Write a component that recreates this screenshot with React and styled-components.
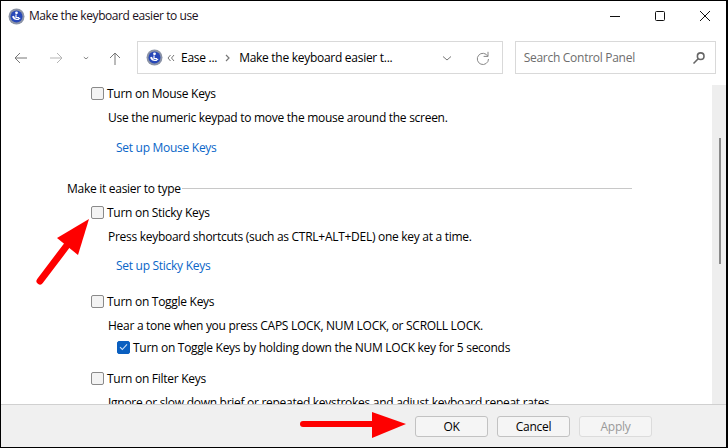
import React from 'react'
import styled, { createGlobalStyle } from 'styled-components'

const Global = createGlobalStyle`
  html, body { margin: 0; padding: 0; background: #fff; }
  * { box-sizing: border-box; }
`

const Window = styled.div`
  position: relative;
  width: 728px;
  height: 448px;
  display: flex;
  flex-direction: column;
  overflow: hidden;
  background: #fff;
  color: #000;
  border: solid #000;
  border-width: 1px 2px 1px 1px;
  font-family: "Open Sans", "Noto Sans", sans-serif;
  font-size: 12px;
  letter-spacing: -0.28px;
`
const TitleBar = styled.div`
  height: 30px;
  flex: none;
  display: flex;
  align-items: center;
  padding-left: 7px;
  gap: 4px;
`
const Title = styled.div`
  flex: 1;
  font-size: 12px;
  letter-spacing: -0.42px;
  margin-top: -1px;
  color: #1a1020;
`
const WinButtons = styled.div`
  display: flex;
  margin-right: -1px;
`
const WinButton = styled.div`
  width: 45px;
  height: 30px;
  display: flex;
  align-items: center;
  justify-content: center;
`
const AddressRow = styled.div`
  height: 33px;
  margin-top: 10px;
  flex: none;
  display: flex;
  align-items: center;
  padding-left: 8px;
  padding-right: 10px;
`
const NavIcons = styled.div`
  width: 128px;
  flex: none;
  display: flex;
  align-items: center;
`
const NavIcon = styled.div`
  width: ${p => p.$w}px;
  display: flex;
  justify-content: center;
`
const Field = styled.div`
  height: 33px;
  border: 1px solid #d9d9d9;
  display: flex;
  align-items: center;
`
const AddressField = styled(Field)`
  width: 367px;
  padding-left: 8px;
  padding-right: 11px;
  svg { flex: none; }
`
const Crumb = styled.span`
  margin: 0 ${p => p.$gap || 0}px;
`
const Spacer = styled.div`
  flex: 1;
`
const Refresh = styled.svg`
  margin-left: 20px;
`
const SearchField = styled(Field)`
  width: 202px;
  margin-left: 12px;
  padding-left: 8px;
  padding-right: 9px;
  justify-content: space-between;
  color: #6d6d6d;
`
const Body = styled.div`
  flex: none;
  height: 319px;
  margin-top: 11px;
  display: flex;
  overflow: hidden;
`
const Content = styled.div`
  flex: 1;
  padding: 0 0 0 66px;
  overflow: hidden;
`
const Scrollbar = styled.div`
  width: 14px;
  flex: none;
  background: #eeeeee;
  padding: 53px 0 0 7px;
`
const Thumb = styled.div`
  width: 2px;
  height: 126px;
  background: #8a8a8a;
`
const Row = styled.div`
  display: flex;
  align-items: center;
  height: 16px;
  margin-top: ${p => p.$top}px;
  margin-left: ${p => p.$left || 0}px;
  white-space: nowrap;
`
const Box = styled.span`
  width: 13px;
  height: 13px;
  flex: none;
  margin-right: 3px;
  border-radius: 2px;
  border: 1px solid ${p => p.$checked ? '#0a5fc0' : '#8a8a8a'};
  background: ${p => p.$checked ? '#0a5fc0' : '#f3f3f3'};
  display: flex;
  align-items: center;
  justify-content: center;
`
const LinkText = styled.span`
  color: #0a66c8;
`
const SectionRow = styled(Row)`
  width: 565px;
  gap: 1px;
`
const Rule = styled.div`
  flex: 1;
  height: 1px;
  background: #c8c8c8;
`
const Footer = styled.div`
  flex: 1;
  background: #f0f0f0;
  border-top: 1px solid #d0d0d0;
  display: flex;
  align-items: center;
  justify-content: flex-end;
  gap: 9px;
  padding: 0 74px 0 0;
`
const Button = styled.div`
  width: 73px;
  height: 21px;
  border-radius: 3px;
  background: #f5f5f5;
  border: 1px solid ${p => p.$disabled ? '#dcdcdc' : '#c2c2c2'};
  color: ${p => p.$disabled ? '#9a9a9a' : '#000'};
  display: flex;
  align-items: center;
  justify-content: center;
`
const Arrow = styled.svg`
  position: absolute;
  left: 0;
  top: 0;
  pointer-events: none;
`

const CpIcon = () => (
  <svg width="17" height="17" viewBox="0 0 17 17">
    <circle cx="8.5" cy="8.5" r="8" fill="#8b93a6" />
    <circle cx="8.5" cy="8.5" r="6" fill="#2748b8" />
    <circle cx="8.5" cy="4.8" r="1.4" fill="#fff" />
    <path d="M4 8.5c1 3 3.5 4 6.5 3.4l2.2-2-1.6-.2-1.3 1c-1.6.2-3-.3-3.8-3z" fill="#fff" />
    <path d="M8 6.5v3h3" stroke="#fff" strokeWidth="1.2" fill="none" />
  </svg>
)

const Check = () => (
  <svg width="9" height="8" viewBox="0 0 9 8">
    <path d="M1 4.2 3.3 6.5 8 1.3" stroke="#cfe2f8" strokeWidth="1.1" fill="none" />
  </svg>
)

const Line = ({ d, w = 16, h = 16, color = '#7a7a7a' }) => (
  <svg width={w} height={h} viewBox={`0 0 ${w} ${h}`}>
    <path d={d} stroke={color} strokeWidth="1" fill="none" />
  </svg>
)

export default function App() {
  return (
    <>
      <Global />
      <Window>
        <TitleBar>
          <CpIcon />
          <Title>Make the keyboard easier to use</Title>
          <WinButtons>
            <WinButton>
              <Line d="M3 8.5h10" color="#111" />
            </WinButton>
            <WinButton>
              <svg width="12" height="12" viewBox="0 0 12 12">
                <rect x="1.5" y="1.5" width="9" height="9" rx="1" stroke="#111" fill="none" />
              </svg>
            </WinButton>
            <WinButton>
              <Line d="M3 3l10 10M13 3 3 13" color="#111" />
            </WinButton>
          </WinButtons>
        </TitleBar>
        <AddressRow>
          <NavIcons>
            <NavIcon $w={24}><Line d="M2 8h12M7 3 2 8l5 5" color="#777" /></NavIcon>
            <NavIcon $w={46}><Line d="M2 8h12M9 3l5 5-5 5" color="#b5b5b5" /></NavIcon>
            <NavIcon $w={14}><Line d="M5.5 7 8 9l2.5-2" color="#777" /></NavIcon>
            <NavIcon $w={44}><Line d="M8 15V3M3 8l5-5 5 5" color="#777" /></NavIcon>
          </NavIcons>
          <AddressField>
            <CpIcon />
            <Crumb $gap={4}>
              <svg width="8" height="8" viewBox="0 0 8 8">
                <path d="M3.5 1 1 4l2.5 3M7 1 4.5 4 7 7" stroke="#777" fill="none" />
              </svg>
            </Crumb>
            <Crumb $gap={2}>Ease ...</Crumb>
            <Crumb $gap={5}>
              <svg width="7" height="8" viewBox="0 0 7 8">
                <path d="M2 1l3 3-3 3" stroke="#777" strokeWidth="1.2" fill="none" />
              </svg>
            </Crumb>
            <Crumb $gap={3}>Make the keyboard easier t...</Crumb>
            <Spacer />
            <Line d="M4 6.5l4 3.5 4-3.5" color="#777" />
            <Refresh width="16" height="16" viewBox="0 0 16 16">
              <path d="M12.8 6.2A5.6 5.6 0 1 0 13.5 9M13 1.8v4.6H8.6" stroke="#888" fill="none" />
            </Refresh>
          </AddressField>
          <SearchField>
            Search Control Panel
            <svg width="14" height="14" viewBox="0 0 14 14">
              <circle cx="8.7" cy="5.2" r="3.3" stroke="#666" strokeWidth="1.6" fill="none" />
              <path d="M6.2 7.8 1.5 12.5" stroke="#666" strokeWidth="1.6" />
            </svg>
          </SearchField>
        </AddressRow>
        <Body>
          <Content>
            <Row $left={24} $top={0}><Box />Turn on Mouse Keys</Row>
            <Row $left={41} $top={8}>Use the numeric keypad to move the mouse around the screen.</Row>
            <Row $left={49} $top={14}><LinkText>Set up Mouse Keys</LinkText></Row>
            <SectionRow $top={25}>Make it easier to type<Rule /></SectionRow>
            <Row $left={24} $top={8}><Box />Turn on Sticky Keys</Row>
            <Row $left={41} $top={8}>Press keyboard shortcuts (such as CTRL+ALT+DEL) one key at a time.</Row>
            <Row $left={49} $top={13}><LinkText>Set up Sticky Keys</LinkText></Row>
            <Row $left={24} $top={20}><Box />Turn on Toggle Keys</Row>
            <Row $left={41} $top={8}>Hear a tone when you press CAPS LOCK, NUM LOCK, or SCROLL LOCK.</Row>
            <Row $left={50} $top={6}><Box $checked><Check /></Box>Turn on Toggle Keys by holding down the NUM LOCK key for 5 seconds</Row>
            <Row $left={24} $top={15}><Box />Turn on Filter Keys</Row>
            <Row $left={41} $top={8}>Ignore or slow down brief or repeated keystrokes and adjust keyboard repeat rates.</Row>
          </Content>
          <Scrollbar><Thumb /></Scrollbar>
        </Body>
        <Footer>
          <Button>OK</Button>
          <Button>Cancel</Button>
          <Button $disabled>Apply</Button>
        </Footer>
        <Arrow width="726" height="446" viewBox="0 0 726 446">
          <path d="M39 280 67 243" stroke="#fe0000" strokeWidth="7" strokeLinecap="round" />
          <polygon points="88,218 56,237 77,254" fill="#fe0000" />
          <path d="M302 423H376" stroke="#fe0000" strokeWidth="6" strokeLinecap="round" />
          <polygon points="371,411 405,423 371,437" fill="#fe0000" />
        </Arrow>
      </Window>
    </>
  )
}
